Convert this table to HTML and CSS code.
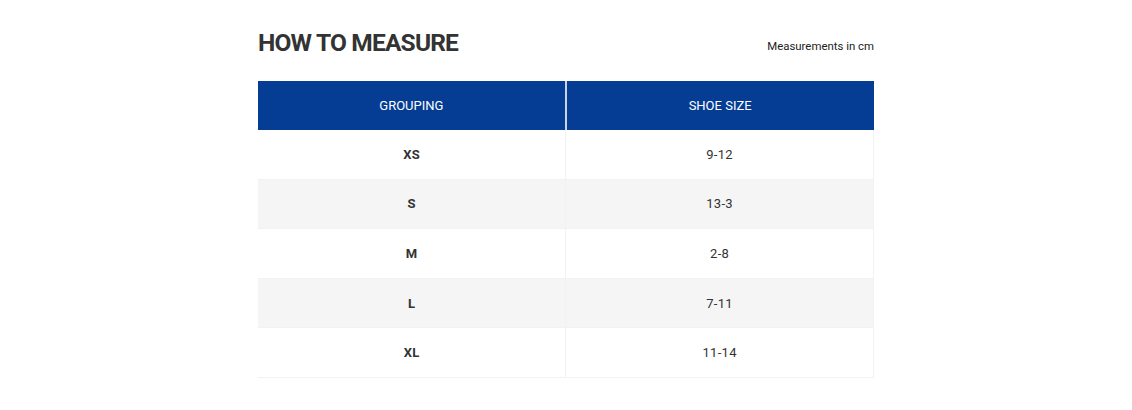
FILE: index.html
```html
<!DOCTYPE html>
<html>
<head>
<meta charset="utf-8">
<link rel="stylesheet" href="styles.css">
</head>
<body>
<div class="wrap">
  <div class="head">
    <h1 class="title">HOW TO MEASURE</h1>
    <span class="unit">Measurements in cm</span>
  </div>
  <table class="sizes">
    <thead>
      <tr><th>GROUPING</th><th>SHOE SIZE</th></tr>
    </thead>
    <tbody>
      <tr><td class="grp">XS</td><td>9-12</td></tr>
      <tr><td class="grp">S</td><td>13-3</td></tr>
      <tr><td class="grp">M</td><td>2-8</td></tr>
      <tr><td class="grp">L</td><td>7-11</td></tr>
      <tr><td class="grp">XL</td><td>11-14</td></tr>
    </tbody>
  </table>
</div>
</body>
</html>
```
FILE: styles.css
```css
html, body { margin: 0; padding: 0; background: #fff; }
body { font-family: Roboto, "Liberation Sans", sans-serif; color: #333; }
.wrap { width: 616px; margin: 0 auto; padding-top: 27px; }
.head { display: flex; justify-content: space-between; align-items: flex-end; height: 54px; }
.title { margin: 0; font-size: 24.5px; font-weight: 700; color: #333; line-height: 30px; letter-spacing: -0.8px; margin-bottom: 23px; }
.unit { font-size: 11.4px; color: #222; margin-bottom: 28px; }
.sizes { width: 100%; border-collapse: collapse; table-layout: fixed; }
.sizes th { background: #043d93; color: #fff; font-weight: 400; font-size: 13px; height: 49px; padding: 0; text-align: center; }
.sizes th + th { border-left: 2px solid #c8d3e6; }
.sizes td { height: 48.6px; padding: 0; text-align: center; font-size: 13px; color: #333; border-left: 1px solid #f2f2f2; border-right: 1px solid #f2f2f2; border-bottom: 1px solid #f2f2f2; letter-spacing: 0.3px; }
.sizes td.grp { font-weight: 700; border-left: none; }
.sizes tbody tr:nth-child(even) td { background: #f5f5f5; }
```
